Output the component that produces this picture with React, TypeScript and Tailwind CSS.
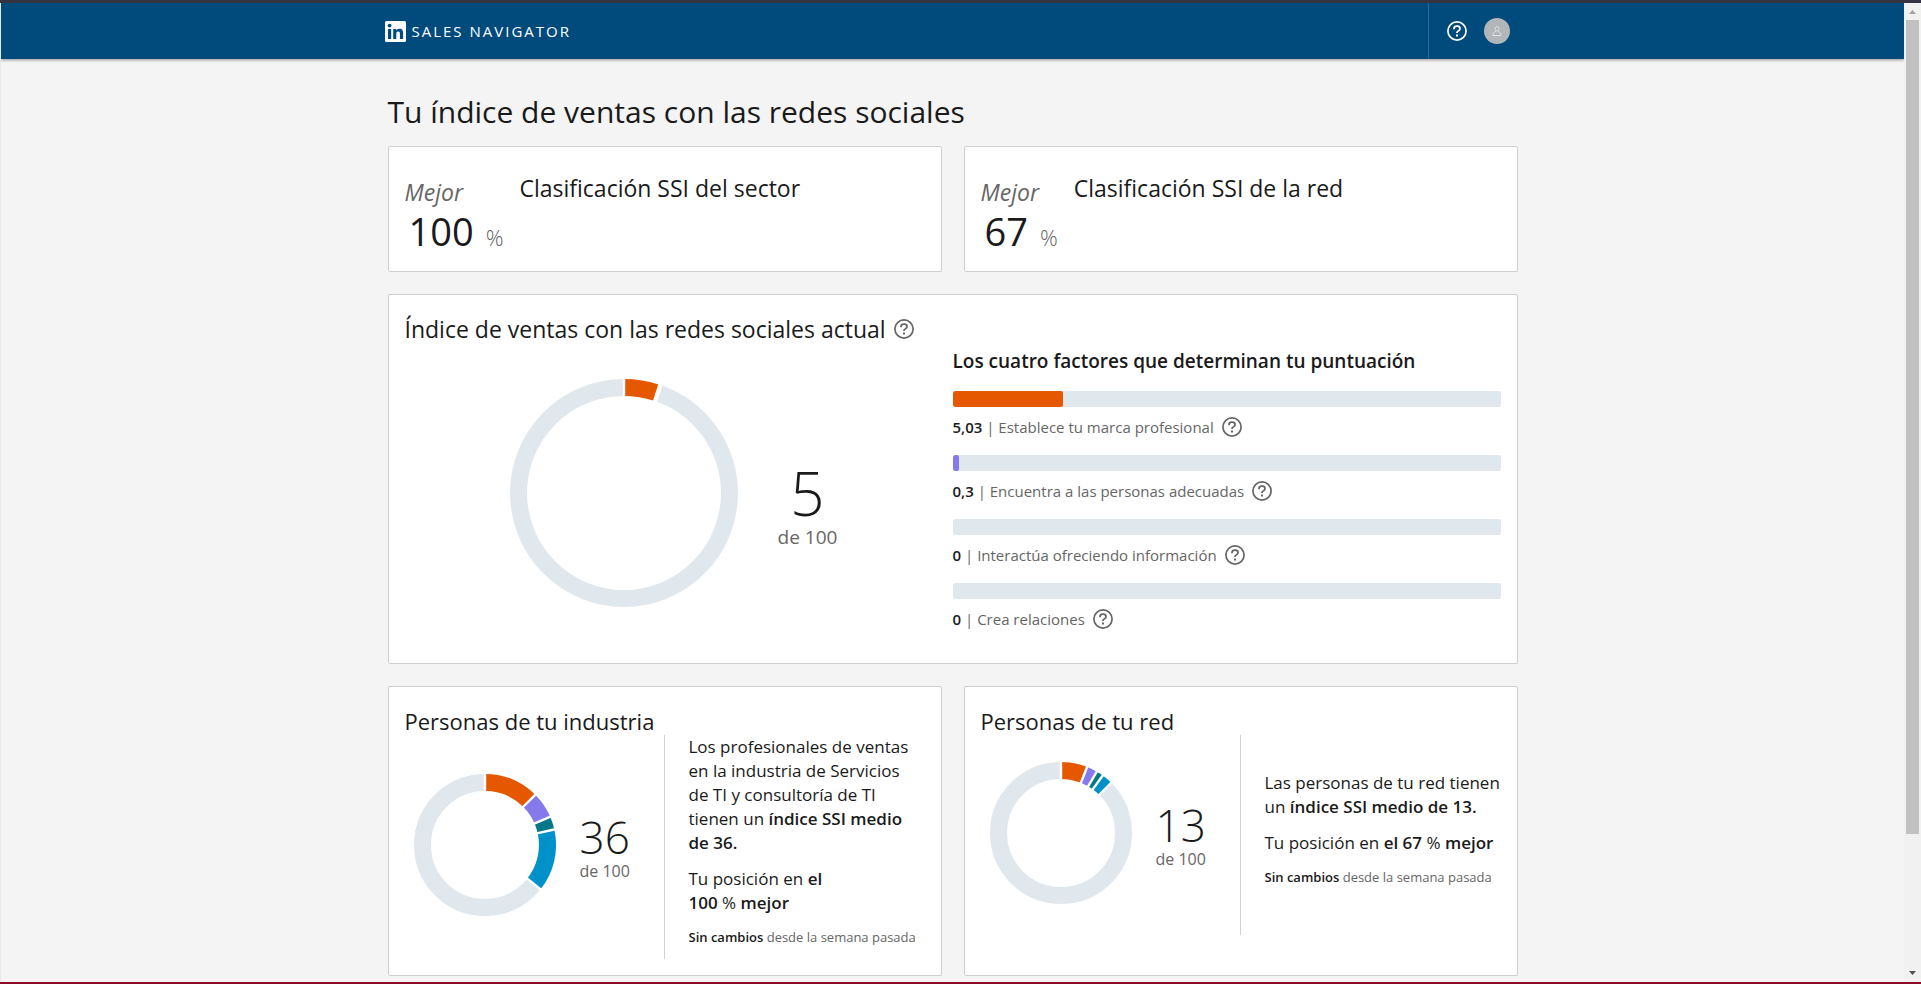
import React from 'react';

interface Segment {
  value: number;
  color: string;
}

const COLORS = {
  orange: '#e65800',
  purple: '#8579ec',
  teal: '#067887',
  blue: '#0091ca',
  track: '#e1e8ed',
};

const factors = [
  { score: '5,03', label: 'Establece tu marca profesional', percent: 20.12, color: 'bg-[#e65800]' },
  { score: '0,3', label: 'Encuentra a las personas adecuadas', percent: 1.2, color: 'bg-[#8579ec]' },
  { score: '0', label: 'Interactúa ofreciendo información', percent: 0, color: 'bg-[#067887]' },
  { score: '0', label: 'Crea relaciones', percent: 0, color: 'bg-[#0091ca]' },
];

function HelpIcon({ className }: { className?: string }) {
  return (
    <svg viewBox="0 0 20 20" className={className} fill="none" stroke="currentColor" aria-hidden="true">
      <circle cx="10" cy="10" r="9.1" strokeWidth="1.7" />
      <path d="M7 8.2V7.6A2.6 2.6 0 0 1 9.6 5.2h.9A2.5 2.5 0 0 1 13 7.6c0 1.1-.6 1.7-1.4 2.1-.9.4-1.6.8-1.6 1.8v.5" strokeWidth="1.8" />
      <path d="M10 13.4v2" strokeWidth="2" />
    </svg>
  );
}

function HelpButton({ label }: { label: string }) {
  return (
    <button type="button" aria-label={label} className="shrink-0 text-[#666666]">
      <HelpIcon className="h-5 w-5" />
    </button>
  );
}

function Donut({ size, segments }: { size: number; segments: Segment[] }) {
  const thickness = 17;
  const center = size / 2;
  const radius = center - thickness / 2;

  const point = (value: number, r: number) => {
    const angle = (value / 100) * Math.PI * 2;
    return [center + r * Math.sin(angle), center - r * Math.cos(angle)];
  };

  let total = 0;
  const arcs = segments.map((segment) => {
    const [x1, y1] = point(total, radius);
    total += segment.value;
    const [x2, y2] = point(total, radius);
    return { ...segment, end: total, d: `M${x1} ${y1}A${radius} ${radius} 0 0 1 ${x2} ${y2}` };
  });

  return (
    <svg width={size} height={size} viewBox={`0 0 ${size} ${size}`} className="shrink-0" fill="none" aria-hidden="true">
      <circle cx={center} cy={center} r={radius} stroke={COLORS.track} strokeWidth={thickness} />
      {arcs.map((arc) => (
        <path key={arc.color} d={arc.d} stroke={arc.color} strokeWidth={thickness} />
      ))}
      {/* white gaps between segments */}
      {[0, ...arcs.map((arc) => arc.end)].map((end, i) => {
        const [x1, y1] = point(end, center - thickness - 1);
        const [x2, y2] = point(end, center + 1);
        return <line key={i} x1={x1} y1={y1} x2={x2} y2={y2} stroke="#fff" strokeWidth="2.4" />;
      })}
    </svg>
  );
}

function Card({ className = '', children }: { className?: string; children: React.ReactNode }) {
  return (
    <section className={`rounded-xs border border-[#cdcfd2] bg-white px-4 ${className}`}>{children}</section>
  );
}

function RankCard({ rank, title }: { rank: string; title: string }) {
  return (
    <Card className="flex gap-4 pt-[27px] pb-[19px]">
      <div>
        <p className="text-[23px] leading-9 text-[#666666] italic">Mejor</p>
        <p className="flex items-baseline gap-3 pl-1 text-[38px] leading-[42px]">
          {rank}
          <span className="text-[22px] leading-none font-light text-[#666666]">%</span>
        </p>
      </div>
      <h2 className="text-[23px] leading-7">{title}</h2>
    </Card>
  );
}

interface PeopleCardProps {
  title: string;
  score: number;
  segments: Segment[];
  children: React.ReactNode;
}

function PeopleCard({ title, score, segments, children }: PeopleCardProps) {
  return (
    <Card className="pt-5 pb-4">
      <h2 className="text-[22px] leading-7">{title}</h2>
      <div className="flex min-h-[200px]">
        <div className="flex w-[260px] shrink-0 items-center gap-6 border-r border-[#d0d2d4] pb-1 pl-[9px]">
          <Donut size={142} segments={segments} />
          <div className="pt-2 text-center">
            <p className="text-[44px] leading-11 font-light">{score}</p>
            <p className="text-[16px] leading-6 text-[#666666]">de 100</p>
          </div>
        </div>
        <div className="flex min-w-0 flex-1 flex-col justify-center pl-6 text-[17px] leading-6">{children}</div>
      </div>
    </Card>
  );
}

function WeeklyChange() {
  return (
    <p className="mb-3 text-[13px] leading-5 text-[#666666]">
      <strong className="font-semibold text-[#1a1a1a]">Sin cambios</strong> desde la semana pasada
    </p>
  );
}

function Header() {
  return (
    <header className="relative h-14 bg-[#004b7c] shadow-[0_1px_3px_rgba(0,0,0,0.4)]">
      <div className="mx-auto flex h-full max-w-[1136px] items-center justify-between pr-[11px]">
        <a href="#" className="flex items-center gap-1.5 text-white">
          <svg viewBox="0 0 21 21" className="h-[21px] w-[21px]" aria-hidden="true">
            <rect width="21" height="21" rx="1.5" fill="#fff" />
            <g fill="#004b7c">
              <circle cx="4.6" cy="4.6" r="1.9" />
              <rect x="3" y="8" width="3.2" height="10" />
              <path d="M8.2 8h3v1.4c.5-.9 1.6-1.7 3.2-1.7 3 0 3.7 2 3.7 4.7V18h-3.200v-5c0-1.300-.1-2.600-1.700-2.600s-1.900 1.200-1.900 2.500V18H8.200z" />
            </g>
          </svg>
          <span className="text-[15px] leading-6 font-medium tracking-[2px]">SALES NAVIGATOR</span>
        </a>
        <div className="flex h-full items-center gap-[17px] border-l border-[#2b698f] pl-[18px] text-white">
          <button type="button" aria-label="Ayuda">
            <HelpIcon className="h-5 w-5" />
          </button>
          <button
            type="button"
            aria-label="Perfil"
            className="flex h-[26px] w-[26px] items-center justify-center rounded-full bg-[#b3b6b9]"
          >
            <svg viewBox="0 0 12 12" className="h-3 w-3" fill="none" stroke="#dfe1e3" aria-hidden="true">
              <path d="M6 1.5c1.200 0 1.800.8 1.800 2S7 6 6 6 4.200 4.700 4.200 3.500 4.800 1.500 6 1.500zM5 6 2 8.500v2h8v-2L7 6" />
            </svg>
          </button>
        </div>
      </div>
    </header>
  );
}

function Scrollbar() {
  return (
    <div className="flex w-[17px] shrink-0 flex-col items-center bg-[#f1f1f1]" aria-hidden="true">
      <svg viewBox="0 0 17 17" className="h-[17px] w-[17px]">
        <path d="M5 11h7L8.500 7z" fill="#a3a3a3" />
      </svg>
      <div className="w-[13px] flex-[814] bg-[#c1c1c1]" />
      <div className="flex-[131]" />
      <svg viewBox="0 0 17 17" className="h-[17px] w-[17px]">
        <path d="M5 6h7l-3.500 4z" fill="#505050" />
      </svg>
    </div>
  );
}

export default function App() {
  return (
    <div className="flex h-screen flex-col border-t-3 border-b-2 border-t-[#333440] border-b-[#8c0b28] bg-[#f4f4f4] font-['Open_Sans','Noto_Sans',sans-serif] text-[#1a1a1a]">
      <div className="flex min-h-0 flex-1">
        <div className="min-w-0 flex-1 overflow-hidden border-l border-[#e9e9e9]">
          <Header />
          <main className="mx-auto max-w-[1130px] pt-[35px]">
            <h1 className="mb-4 text-[30px] leading-9">Tu índice de ventas con las redes sociales</h1>

            <div className="grid grid-cols-2 gap-[22px]">
              <RankCard rank="100" title="Clasificación SSI del sector" />
              <RankCard rank="67" title="Clasificación SSI de la red" />

              <Card className="col-span-2 pt-5 pb-8">
                <div className="flex items-center gap-2">
                  <h2 className="text-[23px] leading-7">Índice de ventas con las redes sociales actual</h2>
                  <HelpButton label="Más información sobre el índice" />
                </div>
                <div className="mt-1 grid grid-cols-2">
                  <div className="mt-8 flex items-center justify-center gap-10 self-start pr-2.5">
                    <Donut
                      size={228}
                      segments={[
                        { value: 5.03, color: COLORS.orange },
                        { value: 0.3, color: COLORS.purple },
                      ]}
                    />
                    <div className="pt-7 text-center">
                      <p className="text-[60px] leading-15 font-light">5</p>
                      <p className="text-[19px] leading-7 text-[#666666]">de 100</p>
                    </div>
                  </div>
                  <div>
                    <h3 className="text-[19px] leading-7 font-semibold">
                      Los cuatro factores que determinan tu puntuación
                    </h3>
                    {factors.map((factor) => (
                      <div key={factor.label} className="mt-4">
                        <div className="h-4 overflow-hidden rounded-xs bg-[#e1e8ed]">
                          <div className={`h-full rounded-xs ${factor.color}`} style={{ width: `${factor.percent}%` }} />
                        </div>
                        <div className="mt-2 flex items-center gap-2">
                          <p className="text-[15px] leading-6 text-[#666666]">
                            <strong className="font-semibold text-[#1a1a1a]">{factor.score}</strong> | {factor.label}
                          </p>
                          <HelpButton label={`Más información: ${factor.label}`} />
                        </div>
                      </div>
                    ))}
                  </div>
                </div>
              </Card>

              <PeopleCard
                title="Personas de tu industria"
                score={36}
                segments={[
                  { value: 12.5, color: COLORS.orange },
                  { value: 6, color: COLORS.purple },
                  { value: 3, color: COLORS.teal },
                  { value: 14.2, color: COLORS.blue },
                ]}
              >
                <p className="mb-3">
                  Los profesionales de ventas en la industria de Servicios <span className="whitespace-nowrap">de TI</span>{' '}
                  y consultoría de TI tienen un <strong className="font-semibold">índice SSI medio de 36.</strong>
                </p>
                <p className="mb-3">
                  Tu posición en <strong className="font-semibold">el</strong>{' '}
                  <span className="whitespace-nowrap">
                    <strong className="font-semibold">100</strong> % <strong className="font-semibold">mejor</strong>
                  </span>
                </p>
                <WeeklyChange />
              </PeopleCard>

              <PeopleCard
                title="Personas de tu red"
                score={13}
                segments={[
                  { value: 6, color: COLORS.orange },
                  { value: 2.4, color: COLORS.purple },
                  { value: 1.6, color: COLORS.teal },
                  { value: 2.5, color: COLORS.blue },
                ]}
              >
                <p className="mb-3">
                  Las personas de tu red tienen un <strong className="font-semibold">índice SSI medio de 13.</strong>
                </p>
                <p className="mb-3">
                  Tu posición en <strong className="font-semibold">el 67</strong> %{' '}
                  <strong className="font-semibold">mejor</strong>
                </p>
                <WeeklyChange />
              </PeopleCard>
            </div>
          </main>
        </div>
        <Scrollbar />
      </div>
    </div>
  );
}
